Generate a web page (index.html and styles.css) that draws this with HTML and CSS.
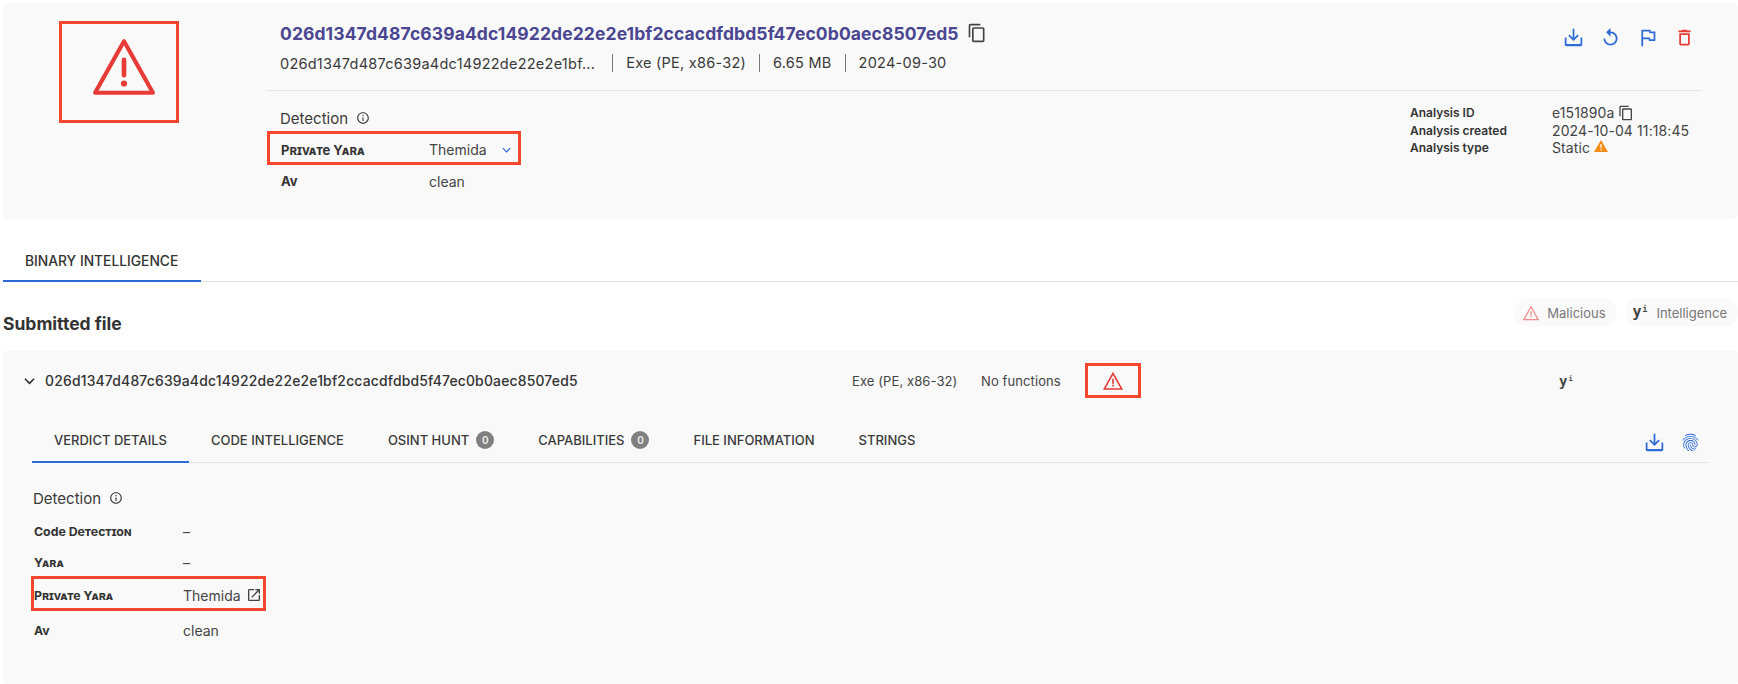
FILE: index.html
```html
<!DOCTYPE html>
<html lang="en">
<head>
<meta charset="utf-8">
<title>Analysis</title>
<link rel="stylesheet" href="styles.css">
</head>
<body>
<svg class="sprite" aria-hidden="true">
  <symbol id="copy" viewBox="0 0 24 24"><path d="M16 1H4c-1.1 0-2 .9-2 2v14h2V3h12V1zm3 4H8c-1.1 0-2 .9-2 2v14c0 1.1.9 2 2 2h11c1.1 0 2-.9 2-2V7c0-1.1-.9-2-2-2zm0 16H8V7h11v14z"/></symbol>
  <symbol id="download" viewBox="0 0 24 24"><path d="M11 2h2v10.2l3.6-3.6L18 10l-6 6-6-6 1.400-1.400 3.600 3.600z"/><path d="M2 12h2v7.500h16V12h2v8c0 1.100-.9 2-2 2H4c-1.100 0-2-.9-2-2z"/></symbol>
  <symbol id="replay" viewBox="0 0 24 24"><path d="M12 5V1L7 6l5 5V7c3.310 0 6 2.690 6 6s-2.690 6-6 6-6-2.690-6-6H4c0 4.420 3.580 8 8 8s8-3.580 8-8-3.580-8-8-8z"/></symbol>
  <symbol id="flag" viewBox="0 0 24 24"><path d="M5 3h10.400l.4 2H21v11h-7.400l-.4-2H7v8H5zm2 2v7h7.800l.4 2H19V7h-4.800l-.4-2z"/></symbol>
  <symbol id="trash" viewBox="0 0 24 24"><path d="M16 9v10H8V9h8m-1.500-6h-5l-1 1H5v2h14V4h-3.500l-1-1zM18 7H6v12c0 1.100.9 2 2 2h8c1.100 0 2-.9 2-2V7z"/></symbol>
  <symbol id="open" viewBox="0 0 24 24"><path d="M19 19H5V5h7V3H5c-1.110 0-2 .9-2 2v14c0 1.100.89 2 2 2h14c1.100 0 2-.9 2-2v-7h-2v7zM14 3v2h3.590l-9.830 9.830 1.410 1.410L19 6.410V10h2V3h-7z"/></symbol>
  <symbol id="info" viewBox="0 0 24 24"><path d="M11 7h2v2h-2zm0 4h2v6h-2zm1-9C6.480 2 2 6.480 2 12s4.480 10 10 10 10-4.480 10-10S17.520 2 12 2zm0 18c-4.410 0-8-3.590-8-8s3.590-8 8-8 8 3.590 8 8-3.590 8-8 8z"/></symbol>
  <symbol id="alert" viewBox="0 0 24 24"><path d="M12 2 1 21.500h22zm0 3.400 8.100 14.500H3.900z" fill-rule="evenodd"/><path d="M11.100 9.500h1.800v5.500h-1.800zM11.100 16h1.800v2h-1.800z"/></symbol>
  <symbol id="finger" viewBox="0 0 24 24"><path d="M17.810 4.470c-.08 0-.16-.02-.23-.06C15.660 3.420 14 3 12.010 3c-1.980 0-3.860.47-5.570 1.410-.24.13-.54.04-.68-.2-.13-.24-.04-.55.2-.68C7.820 2.520 9.860 2 12.010 2c2.130 0 3.990.47 6.030 1.520.25.13.34.43.21.67-.09.18-.26.28-.44.28zM3.500 9.720c-.1 0-.2-.03-.29-.09-.23-.16-.28-.47-.12-.7.99-1.400 2.250-2.500 3.750-3.270C9.980 4.040 14 4.030 17.150 5.650c1.500.77 2.760 1.860 3.750 3.250.16.22.11.54-.12.7-.23.16-.54.11-.7-.12-.9-1.260-2.040-2.250-3.390-2.940-2.870-1.470-6.540-1.470-9.400.01-1.360.7-2.500 1.700-3.400 2.960-.08.14-.23.21-.39.21zm6.250 12.070c-.13 0-.26-.05-.35-.15-.87-.87-1.340-1.430-2.010-2.640-.69-1.230-1.050-2.730-1.050-4.340 0-2.970 2.540-5.390 5.660-5.390s5.660 2.420 5.660 5.390c0 .28-.22.5-.5.5s-.5-.22-.5-.5c0-2.420-2.090-4.390-4.660-4.390-2.570 0-4.660 1.970-4.660 4.390 0 1.440.32 2.770.93 3.850.64 1.150 1.080 1.640 1.850 2.420.19.2.19.51 0 .71-.11.1-.24.15-.37.15zm7.170-1.850c-1.190 0-2.240-.3-3.100-.89-1.490-1.010-2.380-2.650-2.380-4.390 0-.28.22-.5.5-.5s.5.22.5.5c0 1.410.72 2.740 1.940 3.560.71.48 1.540.71 2.540.71.24 0 .64-.03 1.040-.1.27-.05.53.13.58.41.05.27-.13.53-.41.58-.57.11-1.070.12-1.210.12zM14.910 22c-.04 0-.09-.01-.13-.02-1.590-.44-2.630-1.030-3.720-2.100-1.400-1.390-2.170-3.240-2.170-5.220 0-1.620 1.380-2.940 3.080-2.940s3.080 1.320 3.080 2.940c0 1.070.93 1.940 2.080 1.940s2.080-.87 2.080-1.940c0-3.770-3.250-6.830-7.250-6.830-2.840 0-5.440 1.580-6.610 4.030-.39.81-.59 1.760-.59 2.800 0 .78.07 2.010.67 3.610.1.26-.03.55-.29.64-.26.1-.55-.04-.64-.29-.49-1.310-.73-2.610-.73-3.960 0-1.200.23-2.290.68-3.240 1.330-2.790 4.280-4.600 7.510-4.600 4.550 0 8.250 3.510 8.250 7.830 0 1.620-1.380 2.940-3.080 2.940s-3.080-1.320-3.080-2.940c0-1.070-.93-1.940-2.080-1.940s-2.080.87-2.080 1.940c0 1.710.66 3.310 1.870 4.510.95.94 1.860 1.460 3.270 1.850.27.07.42.35.35.61-.05.23-.26.38-.47.38z"/></symbol>
</svg>

<section class="hero">
  <div class="hero-side">
    <div class="mark big-mark">
      <svg class="hero-alert" viewBox="0 0 62 56"><path d="M31 3 3 53h56z" fill="none" stroke="#e63b36" stroke-width="4" stroke-linejoin="round"/><path d="M31 21v15" stroke="#e63b36" stroke-width="4.500" stroke-linecap="round"/><circle cx="31" cy="44" r="3" fill="#e63b36"/></svg>
    </div>
  </div>
  <div class="hero-main">
    <div class="hero-head">
      <div class="hero-titles">
        <div class="title-row">
          <span class="hash-title">026d1347d487c639a4dc14922de22e2e1bf2ccacdfdbd5f47ec0b0aec8507ed5</span>
          <svg class="ic ic-copy"><use href="#copy"/></svg>
        </div>
        <div class="meta-row">
          <span class="meta-name">026d1347d487c639a4dc14922de22e2e1bf...</span>
          <span class="meta-item">Exe (PE, x86-32)</span>
          <span class="meta-item">6.65 MB</span>
          <span class="meta-item">2024-09-30</span>
        </div>
      </div>
      <div class="actions">
        <svg class="ic ic-act blue"><use href="#download"/></svg>
        <svg class="ic ic-act blue"><use href="#replay"/></svg>
        <svg class="ic ic-act blue"><use href="#flag"/></svg>
        <svg class="ic ic-act red"><use href="#trash"/></svg>
      </div>
    </div>
    <div class="hero-body">
      <div class="hero-detect">
        <div class="detect-title">Detection <svg class="ic ic-info"><use href="#info"/></svg></div>
        <div class="mark row-mark-top">
          <span class="label">Private Yara</span>
          <span class="value">Themida</span>
          <svg class="chev-blue" viewBox="0 0 10 6"><path d="M1 1l4 4 4-4" fill="none" stroke="#2d6ad6" stroke-width="1.300"/></svg>
        </div>
        <div class="row-top">
          <span class="label">Av</span>
          <span class="value">clean</span>
        </div>
      </div>
      <dl class="analysis">
        <dt>Analysis ID</dt><dd>e151890a <svg class="ic ic-copy-sm"><use href="#copy"/></svg></dd>
        <dt>Analysis created</dt><dd>2024-10-04 11:18:45</dd>
        <dt>Analysis type</dt><dd>Static <svg class="warn" viewBox="0 0 14 12"><path d="M7 0l7 12H0z" fill="#f28c13"/><path d="M6.400 4h1.200v4H6.400zM6.400 9h1.200v1.200H6.400z" fill="#fff"/></svg></dd>
      </dl>
    </div>
  </div>
</section>

<nav class="page-tabs"><span class="page-tab">BINARY INTELLIGENCE</span></nav>

<div class="sub-head">
  <h2>Submitted file</h2>
  <div class="chips">
    <span class="chip"><svg class="ic-chip"><use href="#alert"/></svg>Malicious</span>
    <span class="chip"><span class="yi yi-chip">y<sup>i</sup></span>Intelligence</span>
  </div>
</div>

<section class="file-card">
  <div class="file-head">
    <svg class="chev" viewBox="0 0 12 8"><path d="M1 1.500l5 5 5-5" fill="none" stroke="#2d2d2d" stroke-width="1.700"/></svg>
    <span class="file-hash">026d1347d487c639a4dc14922de22e2e1bf2ccacdfdbd5f47ec0b0aec8507ed5</span>
    <span class="file-type">Exe (PE, x86-32)</span>
    <span class="file-fn">No functions</span>
    <span class="mark small-mark"><svg class="ic-file-alert"><use href="#alert"/></svg></span>
    <span class="yi yi-file">y<sup>i</sup></span>
  </div>
  <div class="file-tabs">
    <span class="ftab active">VERDICT DETAILS</span>
    <span class="ftab">CODE INTELLIGENCE</span>
    <span class="ftab">OSINT HUNT <b class="badge">0</b></span>
    <span class="ftab">CAPABILITIES <b class="badge">0</b></span>
    <span class="ftab">FILE INFORMATION</span>
    <span class="ftab">STRINGS</span>
    <span class="ftab-icons">
      <svg class="ic ic-tab blue"><use href="#download"/></svg>
      <svg class="ic ic-tab blue"><use href="#finger"/></svg>
    </span>
  </div>
  <div class="verdict">
    <div class="detect-title">Detection <svg class="ic ic-info"><use href="#info"/></svg></div>
    <div class="v-row v-first"><span class="label v-label">Code Detection</span><span class="value">–</span></div>
    <div class="v-row"><span class="label v-label">Yara</span><span class="value">–</span></div>
    <div class="mark v-mark"><span class="label v-label">Private Yara</span><span class="value">Themida</span><svg class="ic ic-open"><use href="#open"/></svg></div>
    <div class="v-row v-last"><span class="label v-label">Av</span><span class="value">clean</span></div>
  </div>
</section>
</body>
</html>
```

FILE: styles.css
```css
* { box-sizing: border-box; }
html, body { margin: 0; padding: 0; }
body {
  width: 1738px;
  height: 684px;
  overflow: hidden;
  background: #fff;
  font-family: Inter, "Liberation Sans", sans-serif;
  font-size: 14px;
  color: #3a3a3a;
}
.sprite { width: 0; height: 0; position: absolute; }
.ic { fill: currentColor; flex: none; }
.blue { color: #2d6ad6; }
.red { color: #e63b36; }
.mark { border: 3px solid #f4472b; }

.hero {
  display: flex;
  height: 216px;
  margin: 3px 0 0 3px;
  background: #f9f9f9;
  border-radius: 5px;
}
.hero-side { width: 263px; flex: none; padding: 18px 0 0 56px; }
.big-mark {
  width: 120px;
  height: 102px;
  display: flex;
  justify-content: center;
  padding: 14px 0 0 10px;
}
.hero-alert { width: 64px; height: 58px; }
.hero-main { flex: 1; margin-right: 36px; }
.hero-head {
  height: 88px;
  display: flex;
  justify-content: space-between;
  border-bottom: 1.500px solid #e6e6e6;
  padding: 18px 0 0 14px;
}
.title-row { display: flex; align-items: center; gap: 8px; height: 24px; }
.hash-title { font-size: 17.500px; font-weight: 700; color: #4a4691; letter-spacing: .1px; }
.ic-copy { width: 20px; height: 20px; color: #444; }
.meta-row { display: flex; align-items: center; margin-top: 8px; height: 20px; font-size: 14.500px; letter-spacing: .25px; }
.meta-name { padding-right: 17px; }
.meta-item { border-left: 1px solid #777; padding: 0 13px; line-height: 18px; }
.actions { display: flex; gap: 16px; padding: 6px 7px 0 0; }
.ic-act { width: 21px; height: 21px; }

.hero-body { display: flex; justify-content: space-between; }
.hero-detect { padding-top: 17px; }
.detect-title {
  display: flex;
  align-items: center;
  gap: 8px;
  height: 20px;
  font-size: 15px;
  padding-left: 14px;
}
.ic-info { width: 14px; height: 14px; }
.label { font-variant: small-caps; font-weight: 700; font-size: 13px; color: #333; }
.value { font-size: 14px; color: #444; }
.row-mark-top {
  display: flex;
  align-items: center;
  width: 254px;
  height: 34px;
  margin: 3px 0 0 1px;
  padding: 3px 0 0 11px;
}
.row-mark-top .label { width: 148px; }
.chev-blue { width: 9px; height: 6px; margin-left: 15px; }
.row-top { display: flex; align-items: center; height: 20px; margin-top: 6px; padding-left: 15px; }
.row-top .label { width: 148px; }
.analysis {
  display: grid;
  grid-template-columns: 142px 150px;
  grid-auto-rows: 17.500px;
  margin: 13px 0 0;
  align-items: center;
}
.analysis dt { font-size: 12px; font-weight: 600; color: #333; }
.analysis dd { margin: 0; display: flex; align-items: center; gap: 4px; font-size: 14px; letter-spacing: .1px; color: #444; white-space: nowrap; }
.ic-copy-sm { width: 16px; height: 16px; color: #444; }
.warn { width: 14px; height: 12px; margin-bottom: 3px; }

.page-tabs { height: 63px; margin-left: 3px; border-bottom: 1.500px solid #e2e2e2; display: flex; align-items: flex-end; }
.page-tab {
  width: 198px;
  height: 44px;
  padding: 15px 0 0 22px;
  border-bottom: 2px solid #2d6ad6;
  margin-bottom: -1px;
  font-size: 13.800px;
  font-weight: 500;
  color: #333;
}

.sub-head { height: 69px; padding-left: 3px; display: flex; justify-content: space-between; }
.sub-head h2 { margin: 30px 0 0; font-size: 17.500px; line-height: 24px; font-weight: 700; color: #333; }
.chips { display: flex; gap: 8px; padding-top: 16px; }
.chip {
  display: flex;
  align-items: center;
  gap: 7px;
  height: 29px;
  padding: 0 11px 0 8px;
  border-radius: 15px;
  background: #fafafa;
  color: #777;
  font-size: 13px;
}
.ic-chip { width: 18px; height: 18px; fill: #f28d8d; }
.yi { font-family: "DejaVu Sans Mono", monospace; font-weight: 700; color: #444; font-size: 14px; line-height: 1; }
.yi sup { font-size: 7px; margin-left: 1px; vertical-align: 5px; line-height: 0; }
.yi-chip { font-size: 15px; margin-right: 2px; }
.yi-chip sup { font-size: 8px; }

.file-card { height: 333px; margin-left: 3px; background: #f9f9f9; border-radius: 4px; }
.file-head { display: flex; align-items: center; height: 59px; padding-left: 21px; margin-bottom: 1px; }
.chev { width: 11px; height: 8px; margin-right: 10px; }
.file-hash { width: 807px; font-size: 13.900px; font-weight: 500; letter-spacing: .2px; color: #333; }
.file-type { width: 129px; font-size: 13px; letter-spacing: .1px; color: #444; }
.file-fn { width: 104px; font-size: 13px; letter-spacing: .1px; color: #444; }
.small-mark { display: flex; align-items: center; justify-content: center; width: 56px; height: 35px; }
.ic-file-alert { width: 22px; height: 22px; fill: #e63b36; }
.yi-file { margin-left: 418px; }

.file-tabs {
  display: flex;
  align-items: center;
  height: 52px;
  margin: 0 29px;
  border-bottom: 1.500px solid #e6e6e6;
}
.ftab {
  display: flex;
  align-items: center;
  gap: 7px;
  height: 100%;
  padding: 7px 22px 0;
  font-size: 13px;
  font-weight: 500;
  color: #3a3a3a;
}
.ftab.active { border-bottom: 2px solid #2d6ad6; margin-bottom: -1px; }
.badge {
  display: inline-flex;
  align-items: center;
  justify-content: center;
  width: 18px;
  height: 18px;
  border-radius: 50%;
  background: #808080;
  color: #eee;
  font-size: 10px;
  font-weight: 600;
}
.ftab-icons { margin-left: auto; display: flex; gap: 15px; padding: 11px 8px 0 0; }
.ic-tab { width: 21px; height: 21px; }

.verdict { padding: 25px 0 0 16px; }
.v-label { width: 149px; font-size: 12.300px; flex: none; }
.v-row { display: flex; align-items: center; height: 20px; padding-left: 15px; margin-top: 11px; }
.v-first { margin-top: 13px; }
.v-last { margin-top: 9px; }
.v-mark {
  display: flex;
  align-items: center;
  width: 235px;
  height: 35px;
  margin: 4px 0 0 12px;
  padding-top: 4px;
}
.v-mark .v-label { width: 149px; }
.ic-open { width: 16px; height: 16px; margin: 0 0 2px 5px; color: #444; }
```
